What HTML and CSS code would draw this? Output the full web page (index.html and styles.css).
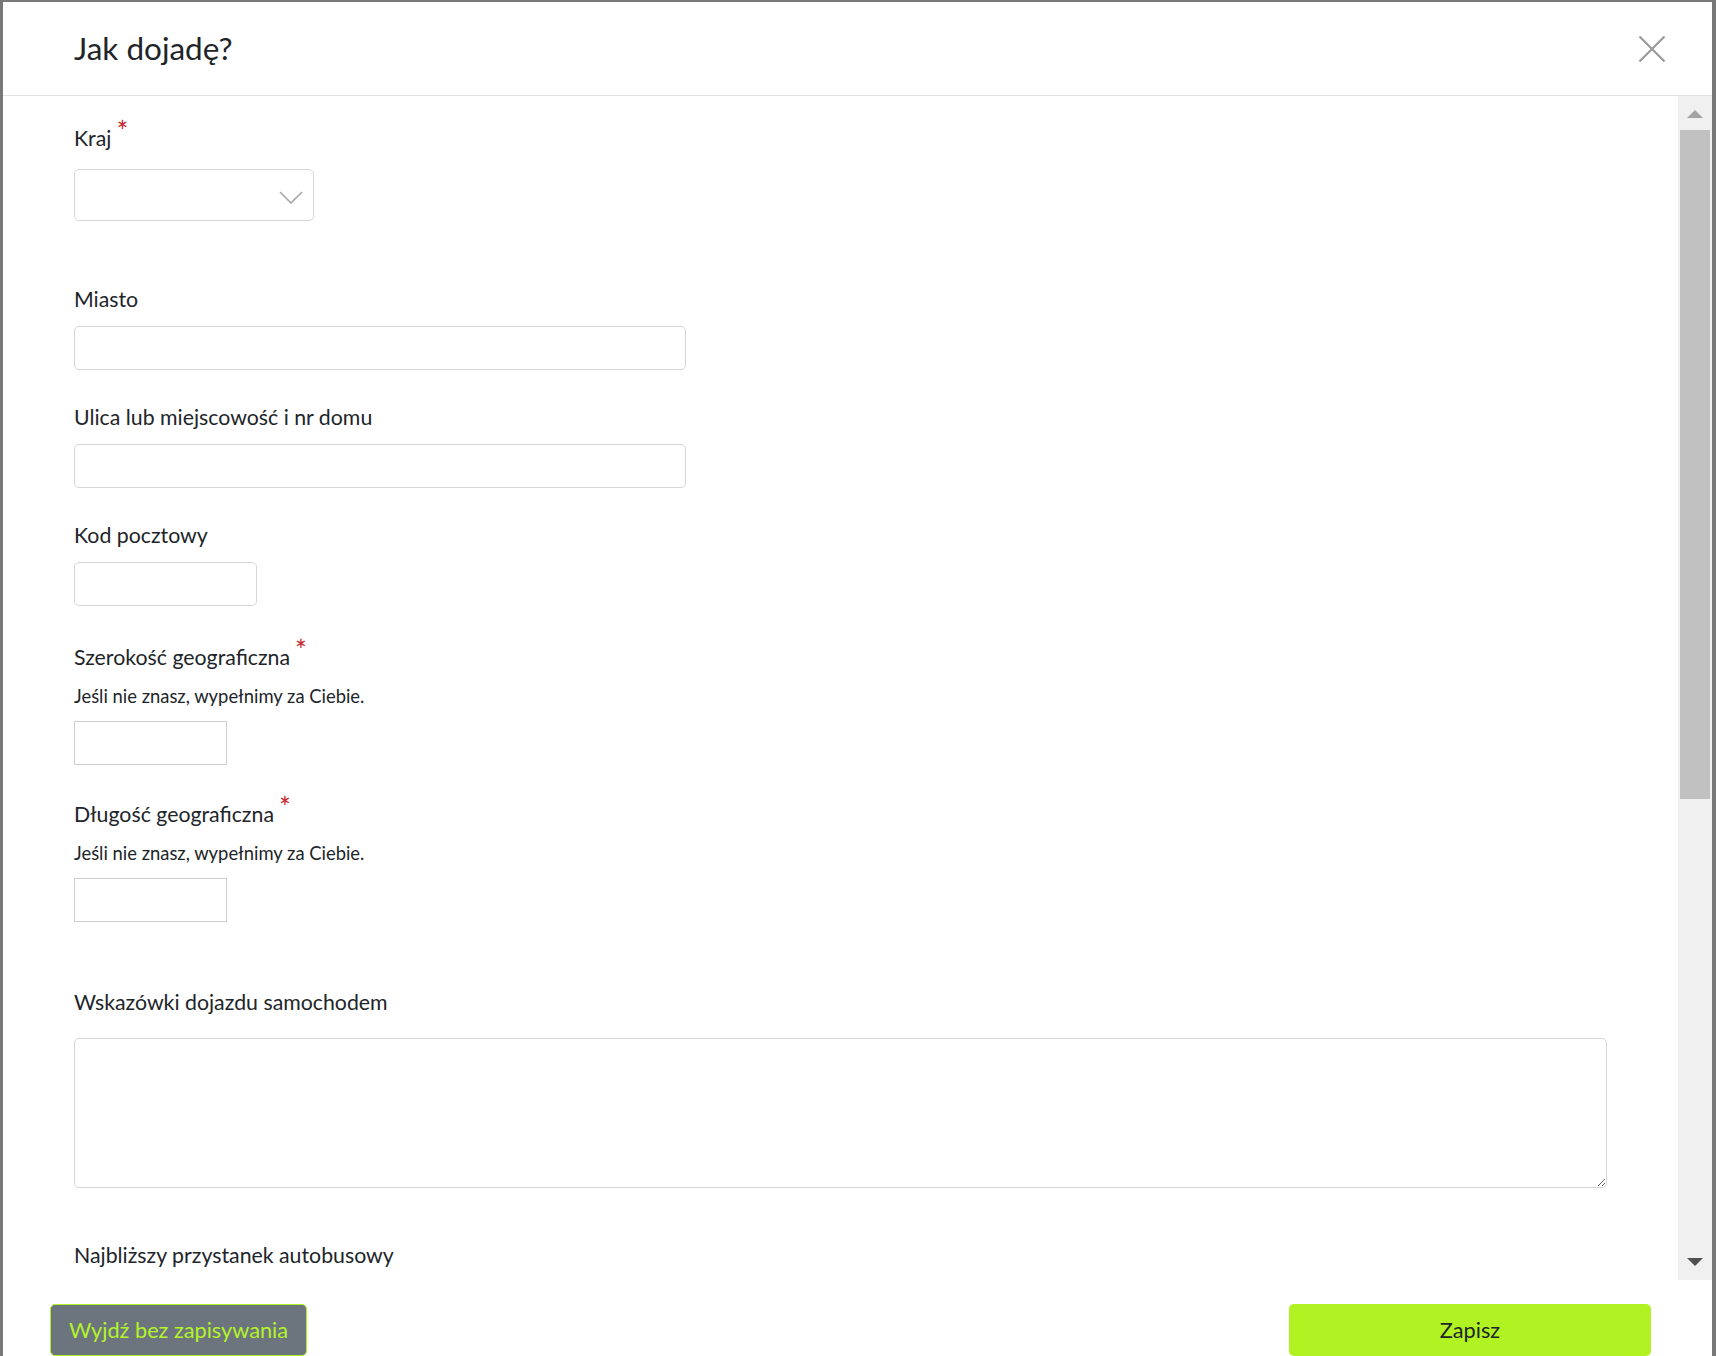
FILE: index.html
```html
<!DOCTYPE html>
<html lang="pl">
<head>
<meta charset="utf-8">
<title>Jak dojadę?</title>
<link rel="stylesheet" href="styles.css">
</head>
<body>
<div class="frame">
  <div class="modal">
    <header class="modal-header">
      <h1 class="modal-title">Jak dojadę?</h1>
      <button class="close" aria-label="Zamknij">
        <svg width="28" height="28" viewBox="0 0 28 28"><path d="M1.5 1.5 L26.5 26.5 M26.5 1.5 L1.5 26.5" stroke="#9a9a9a" stroke-width="2.2" fill="none"/></svg>
      </button>
    </header>
    <div class="modal-body">
      <div class="content">
        <div class="field field-lg">
          <label class="label label-select">Kraj<span class="req">*</span></label>
          <div class="select">
            <svg class="chev" width="24" height="13" viewBox="0 0 24 13"><path d="M1 1 L12 12 L23 1" stroke="#a6a6a6" stroke-width="1.6" fill="none"/></svg>
          </div>
        </div>
        <div class="field">
          <label class="label">Miasto</label>
          <div class="input w-wide"></div>
        </div>
        <div class="field">
          <label class="label">Ulica lub miejscowość i nr domu</label>
          <div class="input w-wide"></div>
        </div>
        <div class="field field-code">
          <label class="label">Kod pocztowy</label>
          <div class="input w-code"></div>
        </div>
        <div class="field field-geo">
          <label class="label label-hinted">Szerokość geograficzna<span class="req">*</span></label>
          <p class="hint">Jeśli nie znasz, wypełnimy za Ciebie.</p>
          <div class="input square w-geo"></div>
        </div>
        <div class="field field-geo-last">
          <label class="label label-hinted">Długość geograficzna<span class="req">*</span></label>
          <p class="hint hint-tight">Jeśli nie znasz, wypełnimy za Ciebie.</p>
          <div class="input square w-geo"></div>
        </div>
        <div class="field field-area">
          <label class="label label-area">Wskazówki dojazdu samochodem</label>
          <textarea class="textarea"></textarea>
        </div>
        <div class="field">
          <label class="label">Najbliższy przystanek autobusowy</label>
          <div class="input w-wide"></div>
        </div>
      </div>
      <div class="scrollbar">
        <div class="arrow arrow-up"></div>
        <div class="thumb"></div>
        <div class="track-rest"></div>
        <div class="arrow arrow-down"></div>
      </div>
    </div>
    <footer class="modal-footer">
      <button class="btn btn-exit">Wyjdź bez zapisywania</button>
      <button class="btn btn-save">Zapisz</button>
    </footer>
  </div>
</div>
</body>
</html>
```

FILE: styles.css
```css
* { box-sizing: border-box; }
html, body { margin: 0; padding: 0; }
body {
  font-family: Lato, "Noto Sans", sans-serif;
  color: #212529;
  background: #777;
  overflow: hidden;
}
.frame {
  height: 1356px;
  padding: 2px 4px 0 3px;
  background: #787878;
  overflow: hidden;
}
.modal {
  background: #fff;
  height: 1400px;
  display: flex;
  flex-direction: column;
}
.modal-header {
  height: 94px;
  flex: none;
  border-bottom: 1px solid #e2e2e2;
  display: flex;
  align-items: center;
  justify-content: space-between;
  padding: 0 46px 0 71px;
}
.modal-title {
  margin: 0;
  font-size: 31.5px;
  font-weight: 400;
  line-height: 36px;
  position: relative;
  top: -1px;
}
.close {
  border: 0;
  background: none;
  padding: 0;
  width: 28px;
  height: 28px;
  display: flex;
}
.modal-body {
  height: 1184px;
  flex: none;
  display: flex;
}
.content {
  flex: 1;
  overflow: hidden;
  padding: 31px 0 0 71px;
}
.field { margin-bottom: 36px; }
.field-code { margin-bottom: 40px; }
.field-geo { margin-bottom: 38px; }
.field-lg { margin-bottom: 67px; }
.field-geo-last { margin-bottom: 69px; }
.field-area { margin-bottom: 56px; }
.label {
  display: block;
  font-size: 21.3px;
  line-height: 22px;
  margin-bottom: 16px;
}
.label-select { margin-bottom: 20px; }
.label-hinted { margin-bottom: 17px; }
.label-area { margin-bottom: 25px; }
.req {
  color: #c8232c;
  font-size: 28px;
  line-height: 0;
  position: relative;
  top: -4px;
  margin-left: 5px;
}
.hint {
  margin: 0 0 14px;
  font-size: 18.4px;
  line-height: 22px;
}
.hint-tight { margin-bottom: 14px; }
.select {
  width: 240px;
  height: 52px;
  border: 1px solid #d6d6d6;
  border-radius: 5px;
  display: flex;
  align-items: center;
  justify-content: flex-end;
  padding-right: 10px;
}
.chev { position: relative; top: 2px; }
.input {
  height: 44px;
  border: 1px solid #d6d6d6;
  border-radius: 5px;
}
.input.square { border-radius: 0; border-color: #cfcfcf; }
.w-wide { width: 612px; }
.w-code { width: 183px; }
.w-geo { width: 153px; }
.textarea {
  display: block;
  width: 1533px;
  height: 150px;
  border: 1px solid #d6d6d6;
  border-radius: 5px;
  margin: 0;
  font: inherit;
}
.scrollbar {
  width: 34px;
  flex: none;
  background: #f0f0f0;
  display: flex;
  flex-direction: column;
  align-items: center;
}
.arrow {
  width: 0;
  height: 0;
  border-left: 8px solid transparent;
  border-right: 8px solid transparent;
  flex: none;
}
.arrow-up {
  border-bottom: 8px solid #a3a3a3;
  margin: 14px 0 12px;
}
.thumb {
  width: 30px;
  height: 669px;
  background: #c1c1c1;
  flex: none;
}
.track-rest { flex: 1; }
.arrow-down {
  border-top: 8px solid #505050;
  margin: 0 0 14px;
}
.modal-footer {
  flex: none;
  display: flex;
  justify-content: space-between;
  padding: 24px 61px 0 47px;
}
.btn {
  height: 52px;
  font-family: Lato, "Noto Sans", sans-serif;
  font-size: 21.7px;
  border-radius: 5px;
  padding: 0;
}
.btn-exit {
  width: 257px;
  background: #6c757d;
  border: 1.5px solid #aff221;
  color: #b4f32a;
}
.btn-save {
  width: 362px;
  background: #b0f222;
  border: 0;
  color: #212529;
}
```
